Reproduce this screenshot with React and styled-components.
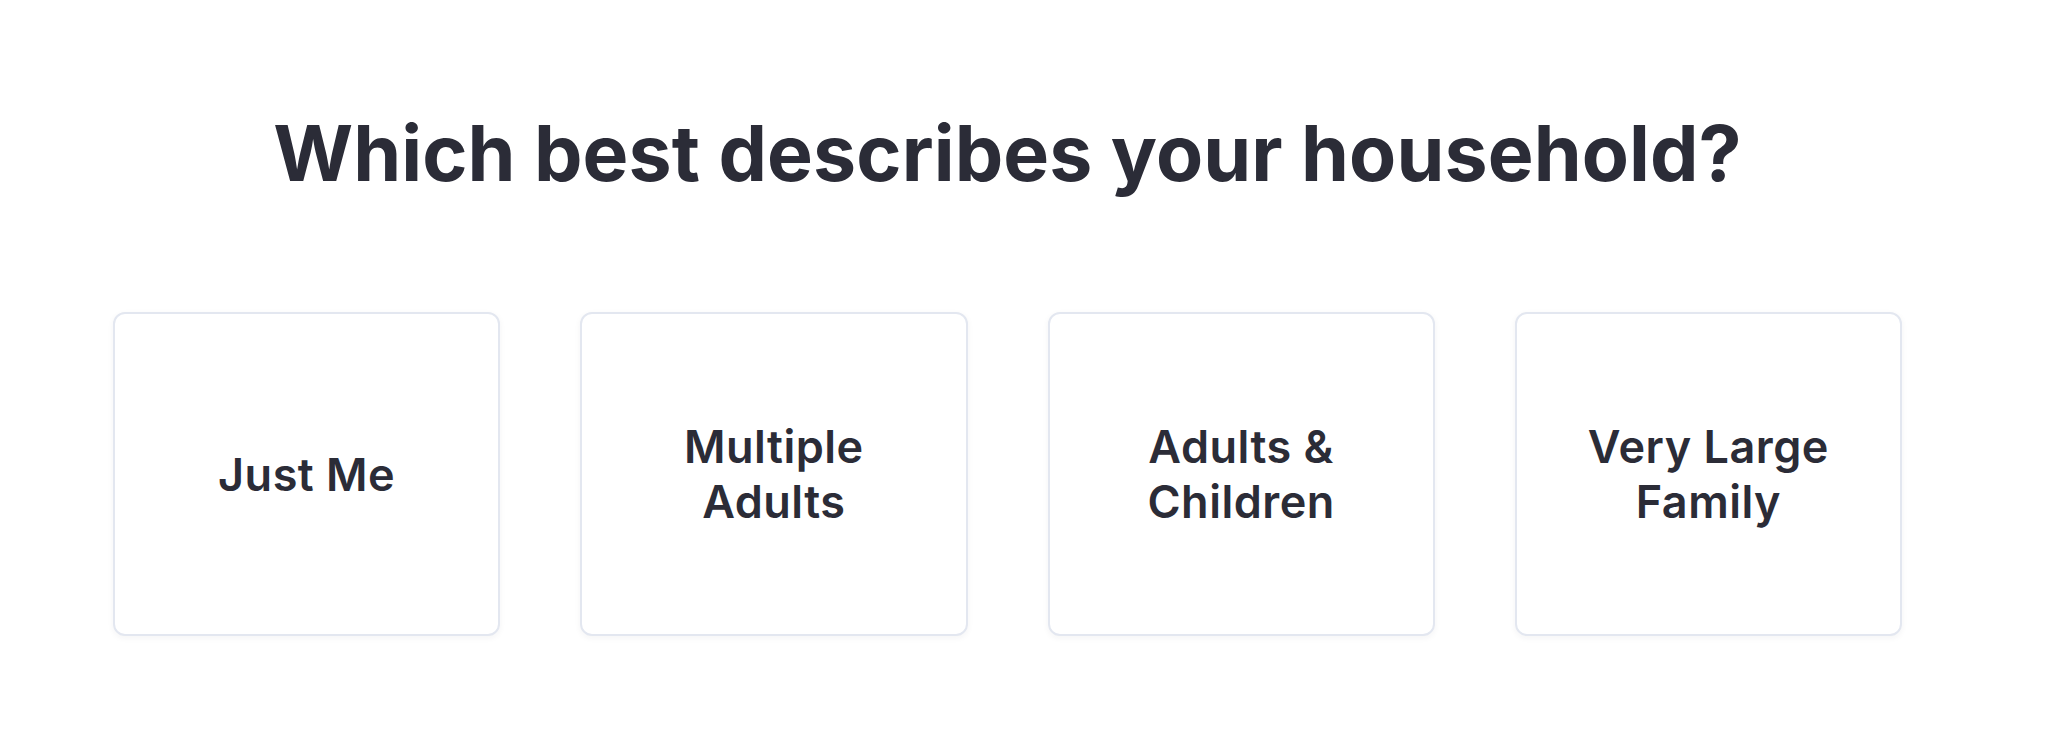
import React from "react";
import styled, { createGlobalStyle } from "styled-components";

const GlobalStyle = createGlobalStyle`
	html, body {
		margin: 0;
		padding: 0;
		background: #ffffff;
	}
	body {
		font-family: Inter, "Open Sans", sans-serif;
		color: #2b2c37;
	}
`;

const Page = styled.main`
	width: 2046px;
	height: 750px;
	box-sizing: border-box;
	padding: 107px 144px 0 113px;
	display: flex;
	flex-direction: column;
	align-items: stretch;
`;

const Title = styled.h1`
	margin: 0;
	font-size: 77px;
	line-height: 1.2;
	font-weight: 700;
	text-align: center;
	letter-spacing: 0.1px;
	color: #2b2c37;
`;

const Options = styled.div`
	margin-top: 113px;
	display: grid;
	grid-template-columns: repeat(4, 1fr);
	gap: 80px;
`;

const OptionCard = styled.button`
	height: 324px;
	box-sizing: border-box;
	display: flex;
	align-items: center;
	justify-content: center;
	padding: 0 40px;
	background: #ffffff;
	border: 2px solid #e3e7f0;
	border-radius: 12px;
	box-shadow: 0 2px 6px rgba(30, 41, 59, 0.05);
	font-family: inherit;
	font-size: 45px;
	line-height: 55px;
	font-weight: 600;
	letter-spacing: 0.5px;
	color: #2b2c37;
	text-align: center;
	cursor: pointer;
`;

const options = [
	["Just Me"],
	["Multiple", "Adults"],
	["Adults &", "Children"],
	["Very Large", "Family"],
];

export default function App() {
	return (
		<>
			<GlobalStyle />
			<Page>
				<Title>Which best describes your household?</Title>
				<Options>
					{options.map((lines) => (
						<OptionCard key={lines.join(" ")}>
							<span>
								{lines.map((line, i) => (
									<React.Fragment key={line}>
										{i > 0 && <br />}
										{line}
									</React.Fragment>
								))}
							</span>
						</OptionCard>
					))}
				</Options>
			</Page>
		</>
	);
}
